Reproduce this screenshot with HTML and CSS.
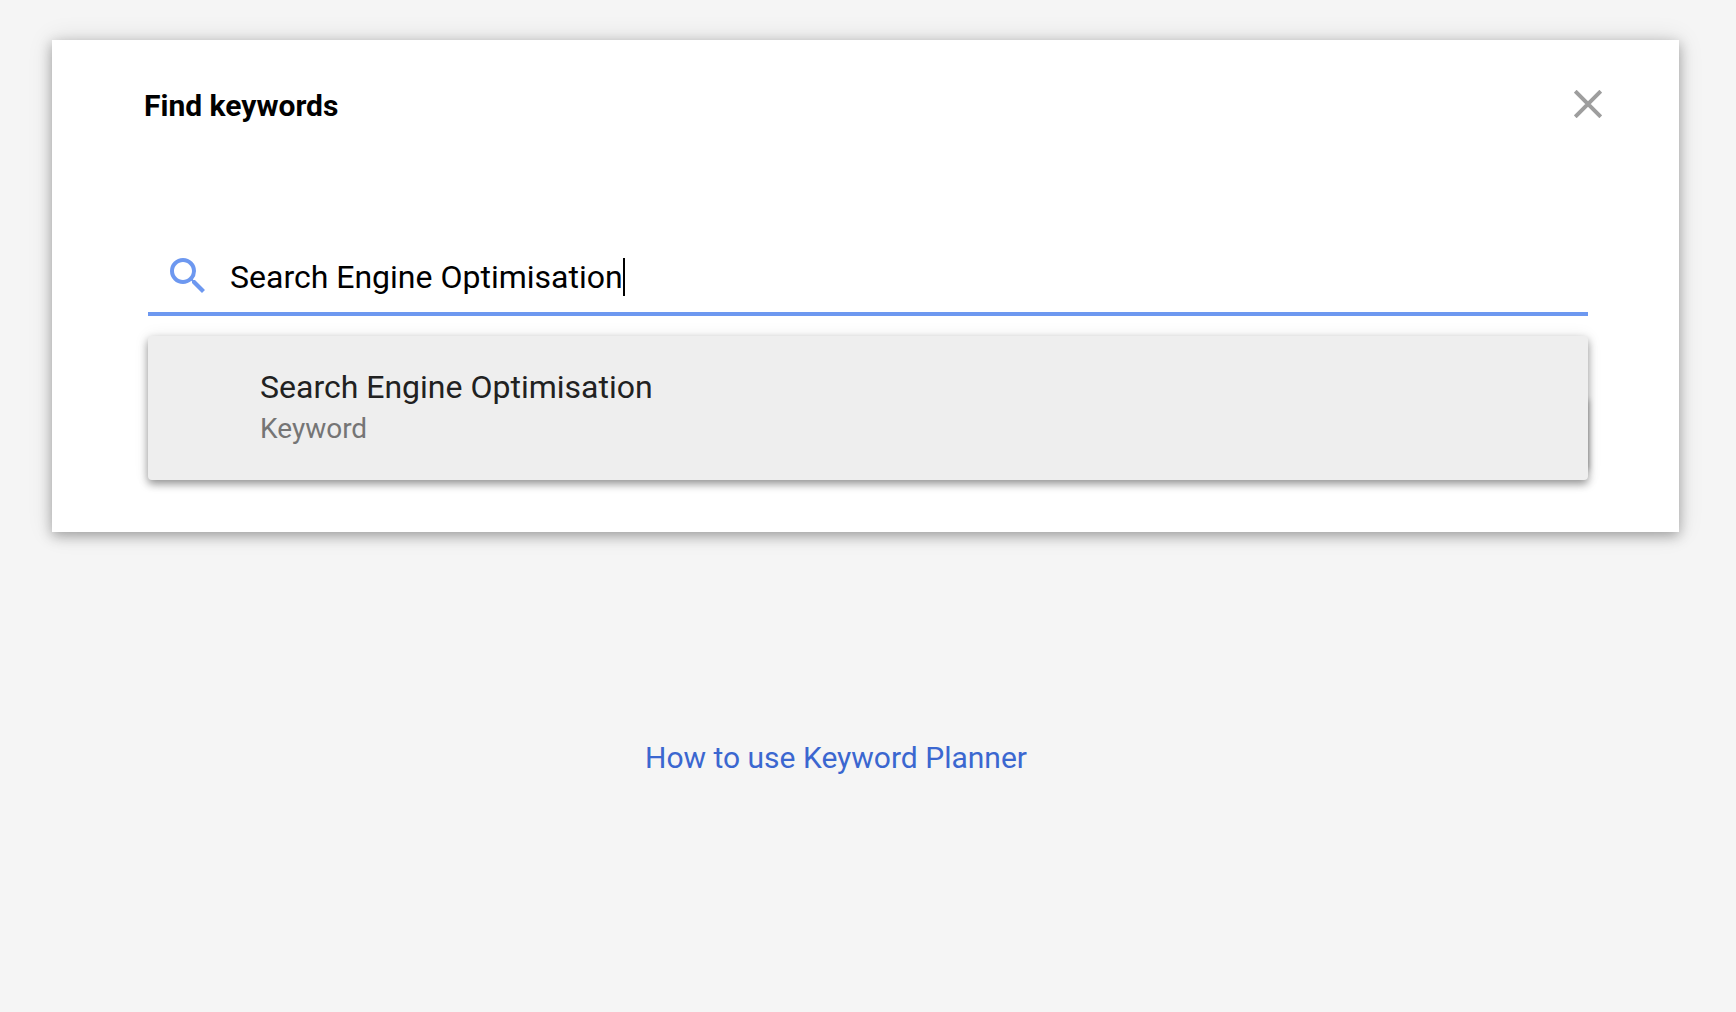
FILE: index.html
```html
<!DOCTYPE html>
<html lang="en">
<head>
  <meta charset="utf-8">
  <meta name="viewport" content="width=device-width, initial-scale=1">
  <title>Find keywords</title>
  <link rel="stylesheet" href="styles.css">
</head>
<body>
  <main class="card">
    <header class="card-header">
      <h1 class="card-title">Find keywords</h1>
      <button class="close" type="button" aria-label="Close">
        <svg class="close-icon" viewBox="0 0 28 28" aria-hidden="true">
          <path d="M1.200 1.200 26.800 26.800M26.800 1.200 1.200 26.800" fill="none" stroke="#9e9e9e" stroke-width="4"/>
        </svg>
      </button>
    </header>
    <form class="finder">
      <label class="search">
        <svg class="search-icon" viewBox="3 3 17.5 17.5" role="img" aria-label="Search">
          <path fill="#6d98f0" d="M15.5 14h-.79l-.28-.27A6.471 6.471 0 0 0 16 9.500 6.500 6.500 0 1 0 9.500 16c1.610 0 3.090-.59 4.230-1.570l.27.28v.79l5 4.990L20.490 19l-4.990-5zm-6 0C7.010 14 5 11.990 5 9.500S7.010 5 9.500 5 14 7.010 14 9.500 11.990 14 9.500 14z"/>
        </svg>
        <input class="search-input" type="text" value="Search Engine Optimisation">
        <span class="caret"></span>
      </label>
      <div class="menu">
        <button class="suggestion" type="button">
          <span class="suggestion-name">Search Engine Optimisation</span>
          <span class="suggestion-type">Keyword</span>
        </button>
      </div>
    </form>
  </main>
  <footer class="help">
    <a class="help-link" href="#">How to use Keyword Planner</a>
  </footer>
</body>
</html>
```
FILE: styles.css
```css
* {
  box-sizing: border-box;
}

body {
  margin: 0;
  background: #f5f5f5;
  font-family: Roboto, "Liberation Sans", sans-serif;
  display: flow-root;
}

button,
input {
  margin: 0;
  padding: 0;
  border: 0;
  background: none;
  font: inherit;
}

.card {
  margin: 40px 57px 0 52px;
  padding: 48px 91px 52px 96px;
  background: #fff;
  box-shadow: 0 4px 12px rgba(0, 0, 0, 0.3), 0 0 24px rgba(0, 0, 0, 0.12);
}

.card-header {
  display: flex;
  align-items: flex-start;
  justify-content: space-between;
  margin: 0 -16px 0 -4px;
}

.card-title {
  margin: 0;
  font-size: 30px;
  line-height: 36px;
  font-weight: 700;
  color: #000;
}

.close {
  display: flex;
  padding: 2px;
}

.close-icon {
  width: 28px;
  height: 28px;
}

.search {
  display: flex;
  align-items: flex-start;
  margin-top: 134px;
  padding: 0 22px 16px;
  border-bottom: 4px solid #6d98f0;
}

.search-icon {
  flex: none;
  width: 35px;
  height: 35px;
  margin-right: 25px;
}

.search-input {
  field-sizing: content;
  height: 38px;
  font-size: 32px;
  line-height: 38px;
  color: #000;
  outline: 0;
}

.caret {
  width: 2px;
  height: 38px;
  background: #000;
}

.menu {
  position: relative;
  z-index: 0;
  margin-top: 20px;
}

/* Edge of the submit button that sits under the open menu */
.menu::before {
  content: "";
  position: absolute;
  z-index: -1;
  right: 0;
  top: 64px;
  bottom: 10px;
  width: 200px;
  box-shadow: 0 0 6px rgba(0, 0, 0, 0.4);
}

.suggestion {
  display: flex;
  flex-direction: column;
  gap: 6px;
  width: 100%;
  padding: 32px 112px 34px;
  border-radius: 4px;
  background: #eee;
  box-shadow: 0 4px 8px rgba(0, 0, 0, 0.4), 0 0 16px rgba(0, 0, 0, 0.08);
  text-align: left;
}

.suggestion-name {
  font-size: 32px;
  line-height: 38px;
  color: #212121;
}

.suggestion-type {
  font-size: 28px;
  line-height: 34px;
  color: #757575;
}

.help {
  margin: 208px 64px 0 0;
  text-align: center;
}

.help-link {
  font-size: 30px;
  line-height: 36px;
  color: #3b67d0;
  text-decoration: none;
}
```
